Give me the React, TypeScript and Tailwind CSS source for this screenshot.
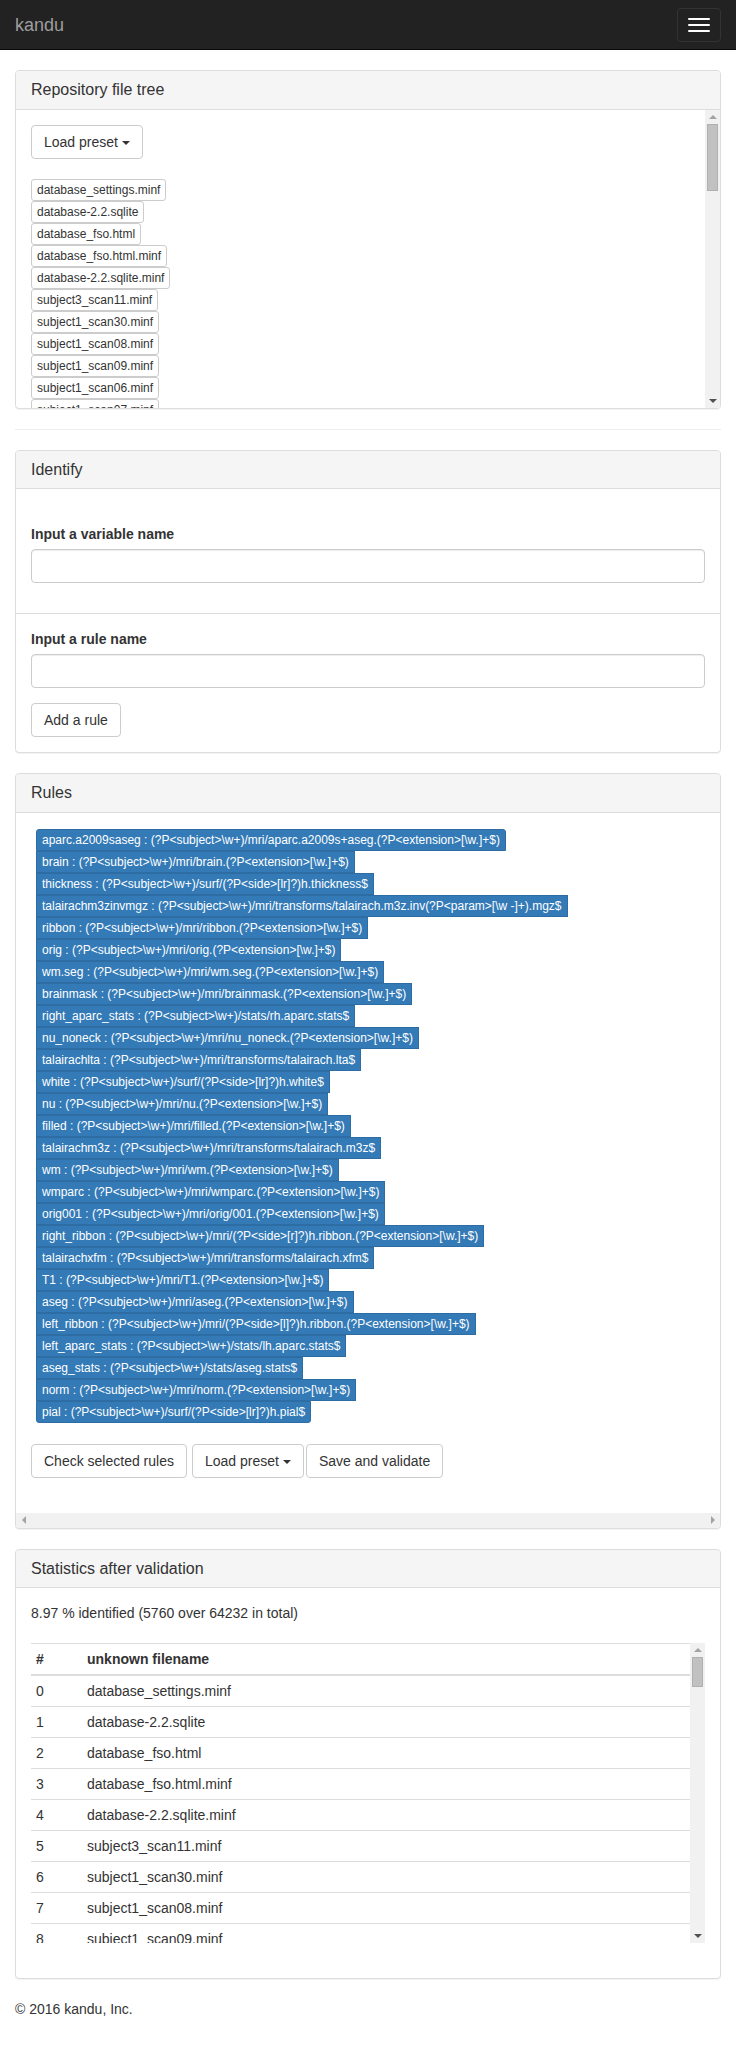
import React from "react";

const baseFiles = [
  "database_settings.minf",
  "database-2.2.sqlite",
  "database_fso.html",
  "database_fso.html.minf",
  "database-2.2.sqlite.minf",
  "subject3_scan11.minf",
  "subject1_scan30.minf",
  "subject1_scan08.minf",
  "subject1_scan09.minf",
  "subject1_scan06.minf",
  "subject1_scan07.minf",
  "subject1_scan04.minf",
  "subject1_scan05.minf",
  "subject1_scan02.minf",
];

const rules = [
  "aparc.a2009saseg : (?P<subject>\\w+)/mri/aparc.a2009s+aseg.(?P<extension>[\\w.]+$)",
  "brain : (?P<subject>\\w+)/mri/brain.(?P<extension>[\\w.]+$)",
  "thickness : (?P<subject>\\w+)/surf/(?P<side>[lr]?)h.thickness$",
  "talairachm3zinvmgz : (?P<subject>\\w+)/mri/transforms/talairach.m3z.inv(?P<param>[\\w -]+).mgz$",
  "ribbon : (?P<subject>\\w+)/mri/ribbon.(?P<extension>[\\w.]+$)",
  "orig : (?P<subject>\\w+)/mri/orig.(?P<extension>[\\w.]+$)",
  "wm.seg : (?P<subject>\\w+)/mri/wm.seg.(?P<extension>[\\w.]+$)",
  "brainmask : (?P<subject>\\w+)/mri/brainmask.(?P<extension>[\\w.]+$)",
  "right_aparc_stats : (?P<subject>\\w+)/stats/rh.aparc.stats$",
  "nu_noneck : (?P<subject>\\w+)/mri/nu_noneck.(?P<extension>[\\w.]+$)",
  "talairachlta : (?P<subject>\\w+)/mri/transforms/talairach.lta$",
  "white : (?P<subject>\\w+)/surf/(?P<side>[lr]?)h.white$",
  "nu : (?P<subject>\\w+)/mri/nu.(?P<extension>[\\w.]+$)",
  "filled : (?P<subject>\\w+)/mri/filled.(?P<extension>[\\w.]+$)",
  "talairachm3z : (?P<subject>\\w+)/mri/transforms/talairach.m3z$",
  "wm : (?P<subject>\\w+)/mri/wm.(?P<extension>[\\w.]+$)",
  "wmparc : (?P<subject>\\w+)/mri/wmparc.(?P<extension>[\\w.]+$)",
  "orig001 : (?P<subject>\\w+)/mri/orig/001.(?P<extension>[\\w.]+$)",
  "right_ribbon : (?P<subject>\\w+)/mri/(?P<side>[r]?)h.ribbon.(?P<extension>[\\w.]+$)",
  "talairachxfm : (?P<subject>\\w+)/mri/transforms/talairach.xfm$",
  "T1 : (?P<subject>\\w+)/mri/T1.(?P<extension>[\\w.]+$)",
  "aseg : (?P<subject>\\w+)/mri/aseg.(?P<extension>[\\w.]+$)",
  "left_ribbon : (?P<subject>\\w+)/mri/(?P<side>[l]?)h.ribbon.(?P<extension>[\\w.]+$)",
  "left_aparc_stats : (?P<subject>\\w+)/stats/lh.aparc.stats$",
  "aseg_stats : (?P<subject>\\w+)/stats/aseg.stats$",
  "norm : (?P<subject>\\w+)/mri/norm.(?P<extension>[\\w.]+$)",
  "pial : (?P<subject>\\w+)/surf/(?P<side>[lr]?)h.pial$",
];

const tableFiles = baseFiles.slice(0, 10);

function Caret() {
  return (
    <span className="inline-block w-0 h-0 ml-[4px] align-middle border-t-[4px] border-x-[4px] border-x-transparent border-t-[#333]" />
  );
}

function Btn({ children, className = "" }: { children: React.ReactNode; className?: string }) {
  return (
    <button
      type="button"
      className={
        "inline-block h-[34px] px-[12px] py-[6px] text-[14px] leading-[20px] text-[#333] bg-white border border-[#ccc] rounded-[4px] align-middle whitespace-nowrap " +
        className
      }
    >
      {children}
    </button>
  );
}

function VScrollbar({ thumbHeight }: { thumbHeight: string }) {
  return (
    <div className="w-[15px] flex-none bg-[#f1f1f1] flex flex-col items-center">
      <div className="h-[14px] w-full flex items-center justify-center">
        <span className="w-0 h-0 border-x-[4px] border-x-transparent border-b-[4px] border-b-[#a3a3a3]" />
      </div>
      <div className={"w-[11px] bg-[#c1c1c1] border border-[#b0b0b0] " + thumbHeight} />
      <div className="flex-1" />
      <div className="h-[14px] w-full flex items-center justify-center">
        <span className="w-0 h-0 border-x-[4px] border-x-transparent border-t-[4px] border-t-[#505050]" />
      </div>
    </div>
  );
}

function HScrollbar() {
  return (
    <div className="h-[15px] bg-[#f1f1f1] flex items-center justify-between rounded-b-[3px]">
      <div className="w-[15px] h-full flex items-center justify-center">
        <span className="w-0 h-0 border-y-[4px] border-y-transparent border-r-[4px] border-r-[#a3a3a3]" />
      </div>
      <div className="w-[15px] h-full flex items-center justify-center">
        <span className="w-0 h-0 border-y-[4px] border-y-transparent border-l-[4px] border-l-[#a3a3a3]" />
      </div>
    </div>
  );
}

function Panel({
  title,
  children,
  className = "",
}: {
  title: string;
  children: React.ReactNode;
  className?: string;
}) {
  return (
    <div
      className={
        "bg-white border border-[#ddd] rounded-[4px] shadow-[0_1px_1px_rgba(0,0,0,0.05)] " + className
      }
    >
      <div className="bg-[#f5f5f5] border-b border-[#ddd] px-[15px] py-[10px] rounded-t-[3px]">
        <h3 className="text-[16px] leading-[1.1] text-[#333] m-0">{title}</h3>
      </div>
      {children}
    </div>
  );
}

export default function App() {
  return (
    <div
      className="min-h-[2048px] bg-white text-[#333] text-[14px] leading-[20px]"
      style={{ fontFamily: '"Liberation Sans", Arial, Helvetica, sans-serif' }}
    >
      {/* navbar */}
      <nav className="h-[50px] bg-[#222] border-b border-[#080808] flex items-start justify-between px-[15px]">
        <span className="text-[18px] leading-[20px] py-[15px] text-[#9d9d9d]">kandu</span>
        <button
          type="button"
          className="mt-[8px] w-[44px] h-[34px] border border-[#333] rounded-[4px] flex flex-col items-center justify-center gap-[4px]"
        >
          <span className="block w-[22px] h-[2px] bg-white rounded-[1px]" />
          <span className="block w-[22px] h-[2px] bg-white rounded-[1px]" />
          <span className="block w-[22px] h-[2px] bg-white rounded-[1px]" />
        </button>
      </nav>

      <div className="px-[15px] pt-[20px]">
        {/* Repository file tree */}
        <Panel title="Repository file tree">
          <div className="h-[298px] flex">
            <div className="flex-1 overflow-hidden p-[15px]">
              <div className="mb-[20px]">
                <Btn>
                  Load preset
                  <Caret />
                </Btn>
              </div>
              {baseFiles.map((f, i) => (
                <div
                  key={i}
                  className="w-fit h-[22px] px-[5px] py-[1px] text-[12px] leading-[18px] border border-[#ccc] rounded-[3px] bg-white text-[#333] whitespace-nowrap"
                >
                  {f}
                </div>
              ))}
            </div>
            <VScrollbar thumbHeight="h-[67px]" />
          </div>
        </Panel>

        <hr className="my-[20px] border-0 border-t border-[#eee]" />

        {/* Identify */}
        <Panel title="Identify">
          <div className="px-[15px] pt-[35px] pb-[15px]">
            <label className="block font-bold mb-[5px]">Input a variable name</label>
            <input
              type="text"
              className="block w-full h-[34px] border border-[#ccc] rounded-[4px] shadow-[inset_0_1px_1px_rgba(0,0,0,0.075)] px-[12px] mb-[15px]"
            />
          </div>
          <div className="border-t border-[#ddd] p-[15px]">
            <label className="block font-bold mb-[5px]">Input a rule name</label>
            <input
              type="text"
              className="block w-full h-[34px] border border-[#ccc] rounded-[4px] shadow-[inset_0_1px_1px_rgba(0,0,0,0.075)] px-[12px] mb-[15px]"
            />
            <Btn>Add a rule</Btn>
          </div>
        </Panel>

        {/* Rules */}
        <Panel title="Rules" className="mt-[20px]">
          <div className="overflow-hidden px-[15px] pt-[15px] pb-[35px]">
            <div className="ml-[5px] mt-[1px]">
              {rules.map((r, i) => (
                <div
                  key={i}
                  className={
                    "w-fit h-[22px] px-[5px] py-[1px] text-[12px] leading-[18px] text-white bg-[#337ab7] border border-[#2e6da4] whitespace-nowrap " +
                    (i === 0 ? "rounded-t-[3px]" : i === rules.length - 1 ? "rounded-b-[3px]" : "")
                  }
                >
                  {r}
                </div>
              ))}
            </div>
            <div className="mt-[21px] flex items-center">
              <Btn>Check selected rules</Btn>
              <Btn className="ml-[5px]">
                Load preset
                <Caret />
              </Btn>
              <Btn className="ml-[2px]">Save and validate</Btn>
            </div>
          </div>
          <HScrollbar />
        </Panel>

        {/* Statistics */}
        <Panel title="Statistics after validation" className="mt-[20px]">
          <div className="p-[15px]">
            <p className="mb-[20px]">8.97 % identified (5760 over 64232 in total)</p>
            <div className="h-[300px] flex mb-[20px]">
              <div className="flex-1 overflow-hidden">
                <table className="w-full border-collapse border-t border-[#ddd]">
                  <thead>
                    <tr>
                      <th className="w-[51px] text-left font-bold px-[5px] py-[5px] border-b-2 border-[#ddd]">#</th>
                      <th className="text-left font-bold px-[5px] py-[5px] border-b-2 border-[#ddd]">
                        unknown filename
                      </th>
                    </tr>
                  </thead>
                  <tbody>
                    {tableFiles.map((f, i) => (
                      <tr key={i}>
                        <td className={"px-[5px] py-[5px] " + (i === 0 ? "" : "border-t border-[#ddd]")}>{i}</td>
                        <td className={"px-[5px] py-[5px] " + (i === 0 ? "" : "border-t border-[#ddd]")}>{f}</td>
                      </tr>
                    ))}
                  </tbody>
                </table>
              </div>
              <VScrollbar thumbHeight="h-[30px]" />
            </div>
          </div>
        </Panel>

        <footer className="mt-[20px] pb-[20px]">
          <p>© 2016 kandu, Inc.</p>
        </footer>
      </div>
    </div>
  );
}
